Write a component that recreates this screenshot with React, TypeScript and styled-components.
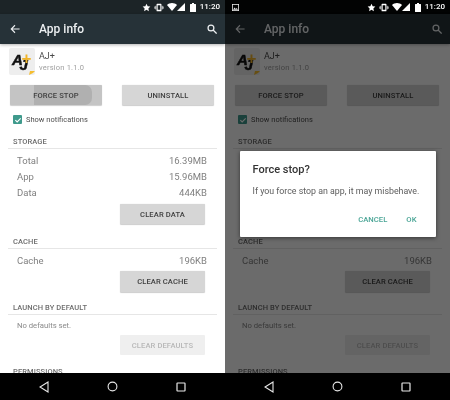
import React from "react";
import styled, { createGlobalStyle } from "styled-components";

const Global = createGlobalStyle`
  html, body { margin: 0; padding: 0; background: #fff; }
  body { font-family: Roboto, "Noto Sans", sans-serif; }
  #root { width: 450px; height: 400px; overflow: hidden; }
`;

const Screen = styled.div`
  display: flex;
  width: 450px;
  height: 400px;
  filter: blur(0.35px);
`;

const Phone = styled.div`
  position: relative;
  display: flex;
  flex-direction: column;
  width: 225px;
  height: 400px;
  overflow: hidden;
  background: #fff;
`;

const StatusBar = styled.div<{ $dim?: boolean }>`
  flex: none;
  display: flex;
  align-items: center;
  height: 14px;
  padding: 0 5px 0 7px;
  background: ${(p) => (p.$dim ? "#020303" : "#1c2427")};
  color: #fff;
`;

const StatusIcons = styled.div`
  display: flex;
  align-items: center;
  margin-left: auto;
  gap: 3px;
`;

const Clock = styled.span`
  margin-left: 1px;
  font-size: 8px;
  font-weight: 500;
  line-height: 14px;
`;

const Toolbar = styled.div`
  flex: none;
  display: flex;
  align-items: center;
  height: 30px;
  padding: 0 8px 0 10px;
  background: #263238;
  color: #eceff1;
  box-shadow: 0 1px 3px rgba(0, 0, 0, 0.3);
  z-index: 1;
`;

const Title = styled.span`
  margin-left: 19px;
  font-size: 12px;
  font-weight: 500;
`;

const SearchSlot = styled.span`
  margin-left: auto;
  display: flex;
`;

const Content = styled.div`
  flex: 1;
  min-height: 0;
  overflow: hidden;
  padding: 4px 8px 0;
  background: #fff;
`;

const AppRow = styled.div`
  display: flex;
  align-items: flex-start;
  gap: 4px;
  padding-left: 1px;
`;

const AppIcon = styled.div`
  flex: none;
  width: 26px;
  height: 27px;
  border-radius: 2px;
  background: #eeeeee;
`;

const AppText = styled.div`
  display: flex;
  flex-direction: column;
  padding-top: 3px;
`;

const AppName = styled.span`
  font-size: 9px;
  line-height: 11px;
  color: #4a4a4a;
`;

const AppVersion = styled.span`
  margin-top: 1px;
  font-size: 7.5px;
  line-height: 10px;
  color: #a0a0a0;
  letter-spacing: 0.2px;
`;

const ButtonRow = styled.div`
  display: flex;
  justify-content: space-between;
  margin: 10px 3px 0 2px;
`;

const ActionButton = styled.div<{ $pressed?: boolean; $disabled?: boolean; $width?: number; $height?: number }>`
  position: relative;
  display: flex;
  align-items: center;
  justify-content: center;
  overflow: hidden;
  width: ${(p) => p.$width ?? 92}px;
  height: ${(p) => p.$height ?? 20}px;
  background: ${(p) => (p.$pressed ? "#c4c4c4" : p.$disabled ? "#efefef" : "#d6d6d6")};
  color: ${(p) => (p.$disabled ? "#b8b8b8" : "#3f3f3f")};
  font-size: 7.6px;
  font-weight: 500;
  letter-spacing: 0.1px;
  border-radius: 1px;
  box-shadow: ${(p) => (p.$disabled ? "none" : "0 0.5px 1px rgba(0,0,0,.2)")};
`;

const Ripple = styled.span`
  position: absolute;
  left: 24px;
  top: 0;
  width: 58px;
  height: 20px;
  border-radius: 0 7px 7px 0;
  background: #b0b0b0;
`;

const ButtonLabel = styled.span`
  position: relative;
`;

const CheckRow = styled.div`
  display: flex;
  align-items: center;
  gap: 4px;
  margin: 10px 0 0 5px;
  font-size: 7.5px;
  color: #4d4d4d;
`;

const CheckBox = styled.span`
  display: flex;
  align-items: center;
  justify-content: center;
  width: 9px;
  height: 9px;
  border-radius: 1px;
  background: #3f9a8c;
`;

const SectionHeader = styled.div<{ $top: number }>`
  margin-top: ${(p) => p.$top}px;
  padding: 0 0 2px 5px;
  border-bottom: 1px solid #e6e6e6;
  font-size: 7.5px;
  line-height: 9px;
  font-weight: 500;
  color: #6d6d6d;
  letter-spacing: 0.1px;
  white-space: nowrap;
`;

const InfoList = styled.div`
  display: flex;
  flex-direction: column;
  padding: 4px 10px 0 9px;
`;

const InfoRow = styled.div`
  display: flex;
  justify-content: space-between;
  height: 16px;
  line-height: 16px;
  font-size: 9.5px;
  color: #808080;
`;

const ButtonLine = styled.div<{ $top: number }>`
  display: flex;
  justify-content: flex-end;
  margin: ${(p) => p.$top}px 12px 0 0;
`;

const NoDefaults = styled.div`
  padding: 6px 0 0 9px;
  font-size: 7.7px;
  line-height: 10px;
  color: #8a8a8a;
`;

const Overlay = styled.div`
  position: absolute;
  left: 0;
  right: 0;
  top: 14px;
  bottom: 27px;
  z-index: 2;
  display: flex;
  align-items: center;
  justify-content: center;
  background: rgba(0, 0, 0, 0.58);
`;

const Dialog = styled.div`
  display: flex;
  flex-direction: column;
  width: 196px;
  height: 86px;
  padding: 12px 19px 0 13px;
  box-sizing: border-box;
  background: #fff;
  border-radius: 1px;
  box-shadow: 0 1px 4px rgba(0, 0, 0, 0.5);
`;

const DialogTitle = styled.div`
  font-size: 11px;
  line-height: 13px;
  font-weight: 500;
  color: #333;
`;

const DialogBody = styled.div`
  margin-top: 10px;
  font-size: 8.8px;
  line-height: 11px;
  color: #5c5c5c;
  white-space: nowrap;
`;

const DialogActions = styled.div`
  display: flex;
  justify-content: flex-end;
  gap: 19px;
  margin-top: 18px;
`;

const DialogAction = styled.span`
  font-size: 7.7px;
  line-height: 10px;
  font-weight: 500;
  color: #4aa596;
`;

const NavBar = styled.div`
  flex: none;
  display: flex;
  align-items: center;
  justify-content: space-between;
  height: 27px;
  padding: 0 39px;
  background: #000;
  z-index: 3;
`;

const Star = () => (
  <svg width="9" height="9" viewBox="0 0 24 24" fill="#fff">
    <path d="M12 2l3.1 6.6 7.2.9-5.3 5 1.4 7.2L12 18.2l-6.4 3.5L7 14.5l-5.3-5 7.2-.9z" />
  </svg>
);
const Vibrate = () => (
  <svg width="10" height="9" viewBox="0 0 24 24" fill="#fff">
    <path d="M7 2h10a1.5 1.5 0 0 1 1.5 1.5v17A1.5 1.5 0 0 1 17 22H7a1.5 1.5 0 0 1-1.5-1.5v-17A1.5 1.5 0 0 1 7 2zm1.5 4v12h7V6z" />
    <path d="M0 9h2v6H0zM2.8 7h1.8v10H2.8zM22 9h2v6h-2zM19.4 7h1.8v10h-1.8z" />
  </svg>
);
const Wifi = () => (
  <svg width="10" height="8" viewBox="0 0 24 19" fill="#fff">
    <path d="M12 19L0 4.5C3.3 1.8 7.5 0 12 0s8.7 1.8 12 4.5z" />
  </svg>
);
const Signal = () => (
  <svg width="8" height="8" viewBox="0 0 8 8" fill="#fff" style={{ marginLeft: -3 }}>
    <path d="M0 8L8 0v8z" />
  </svg>
);
const Battery = () => (
  <svg width="6" height="9" viewBox="0 0 6 9" fill="#fff" style={{ marginLeft: 2 }}>
    <path d="M2 0h2v1h1.5a.5.5 0 0 1 .5.5v7a.5.5 0 0 1-.5.5H.5a.5.5 0 0 1-.5-.5v-7A.5.5 0 0 1 .5 1H2z" />
  </svg>
);
const PictureIcon = () => (
  <svg width="7" height="7" viewBox="0 0 7 7">
    <rect x="0.4" y="0.4" width="6.2" height="6.2" fill="none" stroke="#e8e8e8" strokeWidth="0.8" />
    <path d="M1 5.8l1.6-2.2 1.2 1.3.9-.9 1.3 1.8z" fill="#e8e8e8" />
  </svg>
);
const BackArrow = () => (
  <svg width="10" height="10" viewBox="0 0 24 24" fill="none" stroke="#eceff1" strokeWidth="2.6">
    <path d="M23 12H3M12 3l-9 9 9 9" />
  </svg>
);
const SearchIcon = () => (
  <svg width="10" height="10" viewBox="0 0 24 24" fill="none" stroke="#eceff1" strokeWidth="3">
    <circle cx="9.5" cy="9.5" r="7" />
    <path d="M14.5 14.5L23 23" />
  </svg>
);
const Tick = () => (
  <svg width="8" height="8" viewBox="0 0 24 24" fill="none" stroke="#fff" strokeWidth="3.4">
    <path d="M4 12.5l5.5 5.5L20 7" />
  </svg>
);
const AjLogo = () => (
  <svg width="26" height="27" viewBox="0 0 26 27">
    <text x="3" y="17" fontFamily="Liberation Sans, sans-serif" fontWeight="700" fontStyle="italic" fontSize="15" fill="#111" stroke="#111" strokeWidth="0.5">A</text>
    <text x="10.5" y="22" fontFamily="Liberation Sans, sans-serif" fontWeight="700" fontStyle="italic" fontSize="15" fill="#111" stroke="#111" strokeWidth="0.5">J</text>
    <text x="12.5" y="16" fontFamily="Liberation Sans, sans-serif" fontWeight="700" fontSize="17" fill="#f0b429">+</text>
    <path d="M20 27l1-4h5l-2 2z" fill="#f5bd2e" />
  </svg>
);
const NavBack = () => (
  <svg width="10" height="12" viewBox="0 0 10 12" fill="none" stroke="#e8e8e8" strokeWidth="1.1">
    <path d="M9 1v10L1 6z" />
  </svg>
);
const NavHome = () => (
  <svg width="11" height="11" viewBox="0 0 11 11" fill="none" stroke="#e8e8e8" strokeWidth="1.1">
    <circle cx="5.5" cy="5.5" r="4.4" />
  </svg>
);
const NavRecent = () => (
  <svg width="10" height="10" viewBox="0 0 10 10" fill="none" stroke="#e8e8e8" strokeWidth="1.2">
    <rect x="1" y="1" width="8" height="8" rx="0.5" />
  </svg>
);

const PhoneView = ({ dialog }: { dialog?: boolean }) => (
  <Phone>
    <StatusBar $dim={dialog}>
      {dialog && <PictureIcon />}
      <StatusIcons>
        <Star />
        <Vibrate />
        <Wifi />
        <Signal />
        <Battery />
        <Clock>11:20</Clock>
      </StatusIcons>
    </StatusBar>
    <Toolbar>
      <BackArrow />
      <Title>App info</Title>
      <SearchSlot>
        <SearchIcon />
      </SearchSlot>
    </Toolbar>
    <Content>
      <AppRow>
        <AppIcon>
          <AjLogo />
        </AppIcon>
        <AppText>
          <AppName>AJ+</AppName>
          <AppVersion>version 1.1.0</AppVersion>
        </AppText>
      </AppRow>
      <ButtonRow>
        <ActionButton $pressed={!dialog}>
          {!dialog && <Ripple />}
          <ButtonLabel>FORCE STOP</ButtonLabel>
        </ActionButton>
        <ActionButton>UNINSTALL</ActionButton>
      </ButtonRow>
      <CheckRow>
        <CheckBox>
          <Tick />
        </CheckBox>
        Show notifications
      </CheckRow>
      <SectionHeader $top={13}>STORAGE</SectionHeader>
      <InfoList>
        <InfoRow><span>Total</span><span>16.39MB</span></InfoRow>
        <InfoRow><span>App</span><span>15.96MB</span></InfoRow>
        <InfoRow><span>Data</span><span>444KB</span></InfoRow>
      </InfoList>
      <ButtonLine $top={3}>
        <ActionButton $width={85}>CLEAR DATA</ActionButton>
      </ButtonLine>
      <SectionHeader $top={13}>CACHE</SectionHeader>
      <InfoList>
        <InfoRow><span>Cache</span><span>196KB</span></InfoRow>
      </InfoList>
      <ButtonLine $top={2}>
        <ActionButton $width={85} $height={21}>CLEAR CACHE</ActionButton>
      </ButtonLine>
      <SectionHeader $top={11}>LAUNCH BY DEFAULT</SectionHeader>
      <NoDefaults>No defaults set.</NoDefaults>
      <ButtonLine $top={4}>
        <ActionButton $width={85} $disabled>CLEAR DEFAULTS</ActionButton>
      </ButtonLine>
      <SectionHeader $top={12}>PERMISSIONS</SectionHeader>
    </Content>
    {dialog && (
      <Overlay>
        <Dialog>
          <DialogTitle>Force stop?</DialogTitle>
          <DialogBody>If you force stop an app, it may misbehave.</DialogBody>
          <DialogActions>
            <DialogAction>CANCEL</DialogAction>
            <DialogAction>OK</DialogAction>
          </DialogActions>
        </Dialog>
      </Overlay>
    )}
    <NavBar>
      <NavBack />
      <NavHome />
      <NavRecent />
    </NavBar>
  </Phone>
);

export default function App() {
  return (
    <>
      <Global />
      <Screen>
        <PhoneView />
        <PhoneView dialog />
      </Screen>
    </>
  );
}
